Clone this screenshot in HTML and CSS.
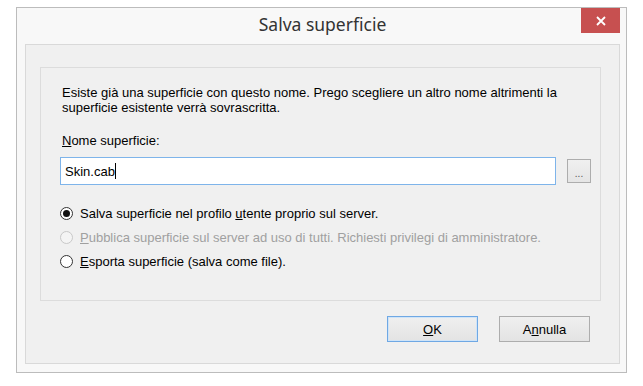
FILE: index.html
```html
<!DOCTYPE html>
<html lang="it">
<head>
    <meta charset="UTF-8">
    <title>Salva superficie</title>
    <link rel="stylesheet" href="styles.css">
</head>
<body>
    <div class="window">
        <div class="titlebar">
            <span></span>
            <h1>Salva superficie</h1>
            <button class="close" type="button">
                <svg width="10" height="10" viewBox="0 0 10 10"><path d="M1 1L9 9M9 1L1 9" stroke="#fff" stroke-width="1.8"/></svg>
            </button>
        </div>
        <div class="client">
            <div class="group">
                <p class="msg">Esiste già una superficie con questo nome. Prego scegliere un altro nome altrimenti la superficie esistente verrà sovrascritta.</p>
                <label class="label" for="name"><u>N</u>ome superficie:</label>
                <div class="name-row">
                    <div class="field" id="name">Skin.cab<span class="caret"></span></div>
                    <button class="browse" type="button">...</button>
                </div>
                <div class="options">
                    <div class="option"><span class="radio checked"></span><span>Salva superficie nel profilo <u>u</u>tente proprio sul server.</span></div>
                    <div class="option disabled"><span class="radio"></span><span><u>P</u>ubblica superficie sul server ad uso di tutti. Richiesti privilegi di amministratore.</span></div>
                    <div class="option"><span class="radio"></span><span><u>E</u>sporta superficie (salva come file).</span></div>
                </div>
            </div>
            <div class="actions">
                <button class="btn default" type="button"><u>O</u>K</button>
                <button class="btn" type="button">A<u>n</u>nulla</button>
            </div>
        </div>
    </div>
</body>
</html>
```

FILE: styles.css
```css
body {
    margin: 0;
    background: #fff;
    font-family: "Liberation Sans", Arial, sans-serif;
    font-size: 13px;
    color: #000;
}
.window {
    box-sizing: border-box;
    width: 611px;
    height: 366px;
    margin: 7px 0 0 16px;
    border: 1px solid #bcbcbc;
    background: #f8f8f8;
    padding: 0 6px 8px 8px;
    display: flex;
    flex-direction: column;
}
.titlebar {
    height: 36px;
    display: grid;
    grid-template-columns: 1fr auto 1fr;
}
.titlebar h1 {
    margin: 0;
    align-self: center;
    font-family: "Noto Sans", sans-serif;
    font-weight: normal;
    font-size: 17.5px;
    color: #333;
    padding-bottom: 4px;
}
.close {
    justify-self: end;
    align-self: start;
    width: 39px;
    height: 25px;
    border: none;
    padding: 0;
    background: #c75050;
    display: flex;
    align-items: center;
    justify-content: center;
}
.client {
    box-sizing: border-box;
    flex: 1;
    border: 1px solid #d9d9d9;
    background: #f0f0f0;
    padding: 22px 18px 0 14px;
}
.group {
    box-sizing: border-box;
    height: 234px;
    border: 1px solid #dcdcdc;
    padding: 17px 0 0 19px;
}
.msg {
    margin: 0 0 0 2px;
    width: 510px;
    line-height: 15px;
}
.label {
    display: block;
    margin: 18px 0 0 2px;
    line-height: 15px;
}
.name-row {
    display: flex;
    align-items: center;
    gap: 11px;
    margin-top: 9px;
}
.field {
    box-sizing: border-box;
    width: 496px;
    height: 28px;
    border: 1px solid #7eb4ea;
    background: #fff;
    padding: 0 4px;
    display: flex;
    align-items: center;
}
.caret {
    width: 1px;
    height: 16px;
    background: #000;
}
.browse {
    box-sizing: border-box;
    width: 24px;
    height: 24px;
    border: 1px solid #adadad;
    background: linear-gradient(#f0f0f0, #e5e5e5);
    color: #555;
    font-size: 10px;
    padding: 0 0 3px;
    line-height: 1;
    display: flex;
    align-items: flex-end;
    justify-content: center;
}
.options {
    margin-top: 21px;
    display: flex;
    flex-direction: column;
    gap: 9px;
}
.option {
    display: flex;
    align-items: center;
    gap: 7px;
    line-height: 15px;
}
.option.disabled {
    color: #a0a0a0;
}
.radio {
    box-sizing: border-box;
    width: 13px;
    height: 13px;
    border: 1px solid #333;
    border-radius: 50%;
    background: #fff;
    display: flex;
    align-items: center;
    justify-content: center;
}
.disabled .radio {
    border-color: #c8c8c8;
    background: #f4f4f4;
}
.radio.checked::after {
    content: "";
    width: 7px;
    height: 7px;
    border-radius: 50%;
    background: #111;
}
.actions {
    display: flex;
    justify-content: flex-end;
    gap: 21px;
    margin: 15px 11px 0 0;
}
.btn {
    box-sizing: border-box;
    width: 91px;
    height: 26px;
    border: 1px solid #adadad;
    background: linear-gradient(#efefef, #e3e3e3);
    font-family: "Liberation Sans", Arial, sans-serif;
    font-size: 13px;
    color: #000;
    padding: 0;
}
.btn.default {
    border-color: #6fa8e4;
    box-shadow: inset 0 0 0 1px #cfe4f8;
}
```
